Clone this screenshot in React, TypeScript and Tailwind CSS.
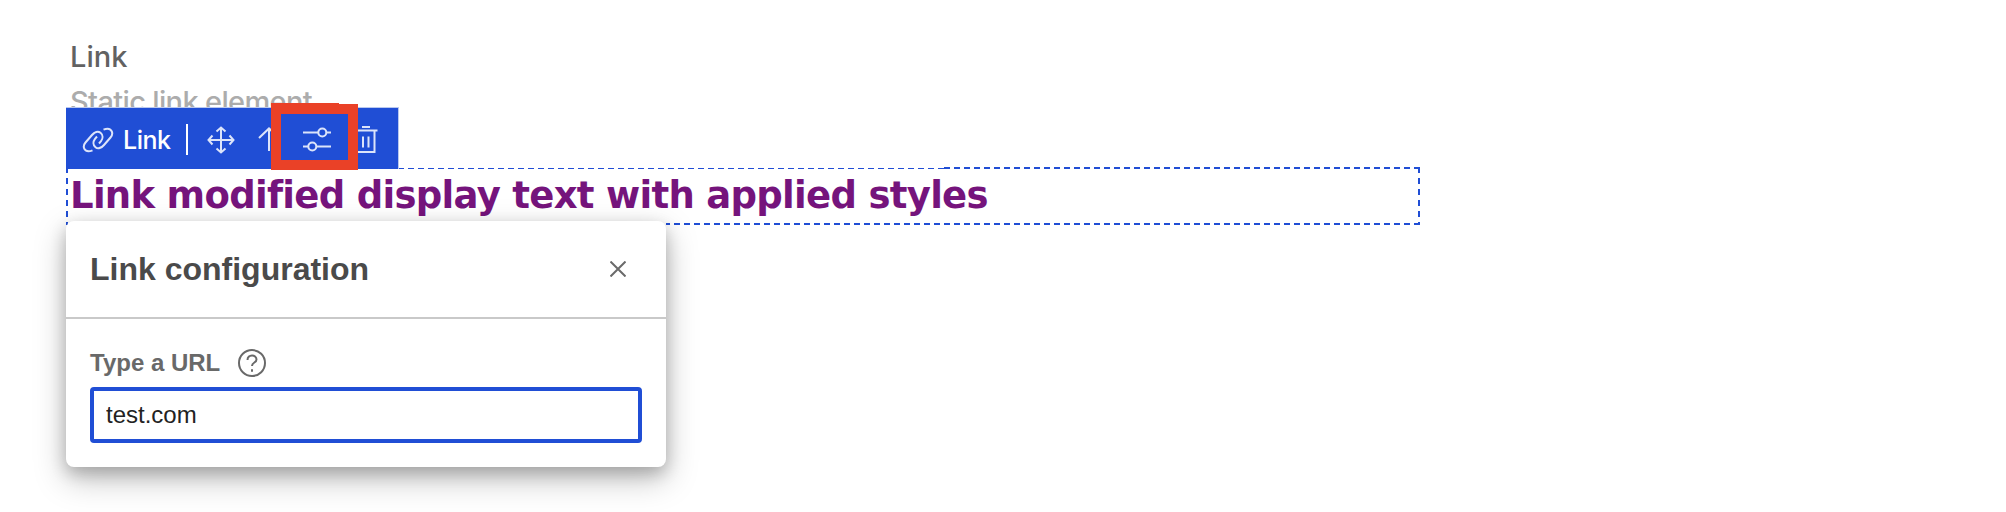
import type { ReactNode } from 'react';

function Icon({ width, height, className = '', children }: { width: number; height: number; className?: string; children: ReactNode }) {
  return (
    <svg width={width} height={height} viewBox={`0 0 ${width} ${height}`} fill="none" stroke="currentColor" strokeWidth="2" className={`shrink-0 ${className}`}>
      {children}
    </svg>
  );
}

function Toolbar() {
  return (
    <div className="absolute left-0 -top-[60px] flex h-[62px] w-[333px] items-center border-t border-r border-[#b9c8ef] bg-[#204ed5] pt-0.5 text-[#dce4fa]">
      <Icon width={32} height={26} className="ml-4">
        <path d="M10.500 23.300C7 24.800 3.800 24.500 2.300 21.800C1.200 19.500 1.800 17.500 3.500 15.500L10 8C12.500 5 16 3.800 18.500 5.800C21.200 8 21 11.500 19 14.200L17 16.500" />
        <path d="M21.500 2.700C25 1.200 28.200 1.500 29.700 4.200C30.800 6.500 30.200 8.500 28.500 10.500L22 18C19.500 21 16 22.200 13.500 20.200C10.800 18 11 14.500 13 11.800L15 9.500" />
      </Icon>
      <span className="ml-[9px] w-[48px] font-['Inter'] text-[25px] leading-8 font-medium tracking-[-0.5px] text-white">Link</span>
      <span className="ml-[15px] h-[31px] w-[2px] bg-white" />
      <Icon width={28} height={28} className="ml-[19px]">
        <path d="M14 1.500v25M1.500 14h25M9.500 5.500 14 1.500l4.500 4M9.500 22.500l4.500 4 4.500-4M5.500 9.500l-4 4.500 4 4.500M22.500 9.500l4 4.500-4 4.500" />
      </Icon>
      <Icon width={22} height={26} className="ml-[23px]">
        <path d="M11 1.500v22.500M1 11 11 1.500l10 9.500" />
      </Icon>
      <Icon width={30} height={28} className="ml-[22px]">
        <path d="M1 6.500h15M24.500 6.500h4.500M1 20.500h5M14.500 20.500h14.500" />
        <circle cx="20.300" cy="6.500" r="4" />
        <circle cx="10.300" cy="20.500" r="4" />
      </Icon>
      <Icon width={24} height={30} className="ml-[22px]">
        <path d="M8 2h8M0 5.500h23.500M2.500 5.500v21.500h18V5.500M9 11.500v11M14.500 11.500v11" />
      </Icon>
    </div>
  );
}

function HighlightFrame() {
  return (
    <div className="absolute left-[205px] -top-[64px] w-[87px]">
      <div className="h-px w-[68px] bg-[#ea4127]" />
      <div className="h-[66px] border-[10px] border-[#ea4127]" />
    </div>
  );
}

function LinkDialog() {
  return (
    <section className="absolute left-0 top-[54px] w-[600px] rounded-lg bg-white pb-6 font-['Liberation_Sans'] shadow-[0_12px_32px_rgba(0,0,0,0.25),0_6px_16px_rgba(0,0,0,0.2)]">
      <header className="flex h-[98px] items-center justify-between border-b-2 border-[#c9c9c9] pr-10 pl-6">
        <h2 className="text-[32px] leading-9 font-bold text-[#4a4a4a]">Link configuration</h2>
        <button aria-label="Close" className="text-[#6a6a6a]">
          <Icon width={16} height={16}><path d="m.5.500 15 15m0-15-15 15" /></Icon>
        </button>
      </header>
      <div className="px-6 pt-[30px]">
        <div className="flex h-[28px] items-center">
          <label htmlFor="url" className="w-[131px] text-2xl font-bold whitespace-nowrap text-[#696969]">Type a URL</label>
          <Icon width={28} height={28} className="ml-[17px] text-[#696969]">
            <circle cx="14" cy="14" r="13" />
            <path d="M9.500 11c0-6 9-6 9-.500 0 3.500-4.500 2.500-4.500 6.500M14 20.300v2.500" />
          </Icon>
        </div>
        <input id="url" defaultValue="test.com" className="mt-[10px] block h-14 w-[552px] rounded border-4 border-[#204ed5] bg-white px-3 text-2xl text-[#222] outline-none" />
      </div>
    </section>
  );
}

export default function App() {
  return (
    <main className="h-[512px] overflow-hidden bg-white pt-[36px] pl-[66px] font-['Inter']">
      <p className="pl-1 text-[29px] leading-[42px] font-medium text-[#626262]">Link</p>
      <p className="pt-[2px] pl-1 text-[29px] leading-[44px] font-medium tracking-[-0.65px] text-[#acacac]">Static link element</p>
      <div className="relative mt-[43px] h-[58px] w-[1354px]">
        <svg width="1354" height="58" fill="none" stroke="#204ed5" className="absolute inset-0">
          <path d="M332 1.500H878" strokeWidth="1" strokeDasharray="6 4" />
          <path d="M878 1H1354" strokeWidth="2" strokeDasharray="6 4" />
          <path d="M1353 0V58M1 0V58" strokeWidth="2" strokeDasharray="6 5" />
          <path d="M1354 57H600" strokeWidth="2" strokeDasharray="6 4" />
        </svg>
        <a className="relative block pt-px pl-1 font-['DejaVu_Sans'] text-[37px] leading-[56px] font-bold tracking-[-0.7px] whitespace-nowrap text-[#75147c]">Link modified display text with applied styles</a>
        <Toolbar />
        <HighlightFrame />
        <LinkDialog />
      </div>
    </main>
  );
}
